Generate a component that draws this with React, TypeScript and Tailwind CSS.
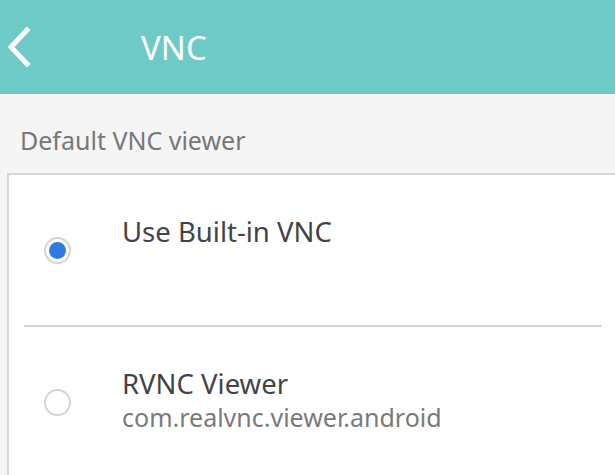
import React from 'react';

type ViewerOption = {
  title: string;
  subtitle?: string;
  selected: boolean;
};

const options: ViewerOption[] = [
  { title: 'Use Built-in VNC', selected: true },
  { title: 'RVNC Viewer', subtitle: 'com.realvnc.viewer.android', selected: false },
];

const Radio: React.FC<{ checked: boolean }> = ({ checked }) => (
  <div className="w-[27px] h-[27px] rounded-full border-2 border-[#d4d4d4] bg-white flex items-center justify-center shrink-0">
    {checked && <div className="w-[17px] h-[17px] rounded-full bg-[#2f7ae5]" />}
  </div>
);

// the subtitle line keeps its height even when empty, so the title sits high
const OptionRow: React.FC<ViewerOption> = ({ title, subtitle, selected }) => (
  <div className="flex items-center h-[150px]">
    <div className="w-[113px] pl-[35px] pt-[1px]">
      <Radio checked={selected} />
    </div>
    <div className="flex flex-col pb-[4px]">
      <span className="text-[27.5px] leading-[34px] text-[#444444]">{title}</span>
      <span className="text-[25px] leading-[32px] h-[32px] text-[#7a7a7a]">{subtitle}</span>
    </div>
  </div>
);

export default function App() {
  return (
    <div className="w-[615px] h-[475px] overflow-hidden bg-[#f5f5f5] font-['Noto_Sans',sans-serif]">
      <header className="h-[94px] bg-[#6ecac7] flex items-center">
        <svg width="36" height="40" viewBox="0 0 36 40" className="ml-[2px]">
          <path d="M25 3 L9 20 L25 37" fill="none" stroke="#ffffff" strokeWidth="5" strokeLinecap="square" />
        </svg>
        <h1 className="ml-[103px] text-[33px] text-white leading-none">VNC</h1>
      </header>
      <div className="pl-[20px] pt-[28px] pb-[15px] text-[25px] leading-[36px] text-[#777777]">
        Default VNC viewer
      </div>
      <div className="ml-[7px] bg-white border-t-2 border-l-2 border-[#d6d6d6]">
        <OptionRow {...options[0]} />
        <div className="ml-[15px] mr-[13px] h-[2px] bg-[#d6d6d6]" />
        <OptionRow {...options[1]} />
      </div>
    </div>
  );
}
